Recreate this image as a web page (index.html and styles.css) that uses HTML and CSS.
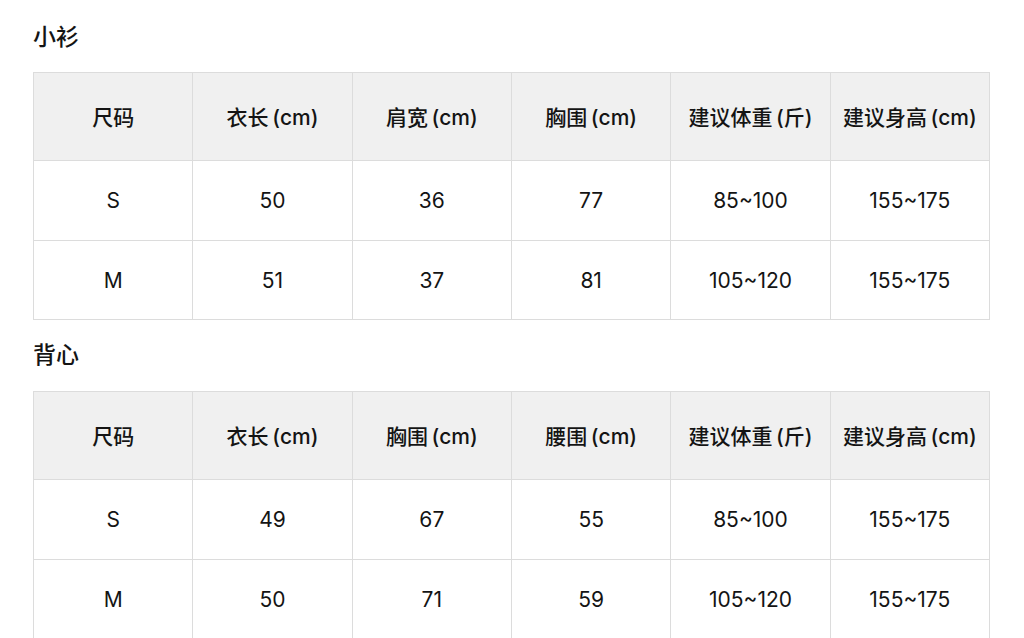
FILE: index.html
```html
<!DOCTYPE html>
<html lang="zh">
<head>
<meta charset="utf-8">
<link rel="stylesheet" href="styles.css">
</head>
<body>
<div class="page">
  <section class="block">
    <h3 class="title">小衫</h3>
    <table class="size-table">
      <thead>
        <tr><th>尺码</th><th>衣长 (cm)</th><th>肩宽 (cm)</th><th>胸围 (cm)</th><th>建议体重 (斤)</th><th>建议身高 (cm)</th></tr>
      </thead>
      <tbody>
        <tr><td>S</td><td>50</td><td>36</td><td>77</td><td>85~100</td><td>155~175</td></tr>
        <tr><td>M</td><td>51</td><td>37</td><td>81</td><td>105~120</td><td>155~175</td></tr>
      </tbody>
    </table>
  </section>
  <section class="block">
    <h3 class="title">背心</h3>
    <table class="size-table">
      <thead>
        <tr><th>尺码</th><th>衣长 (cm)</th><th>胸围 (cm)</th><th>腰围 (cm)</th><th>建议体重 (斤)</th><th>建议身高 (cm)</th></tr>
      </thead>
      <tbody>
        <tr><td>S</td><td>49</td><td>67</td><td>55</td><td>85~100</td><td>155~175</td></tr>
        <tr><td>M</td><td>50</td><td>71</td><td>59</td><td>105~120</td><td>155~175</td></tr>
      </tbody>
    </table>
  </section>
</div>
</body>
</html>
```

FILE: styles.css
```css
html, body {
  margin: 0;
  padding: 0;
  background: #ffffff;
}
body {
  font-family: "Inter", "Noto Sans CJK SC", sans-serif;
  color: #141414;
}
.page {
  padding: 0 34px 0 33px;
}
.title {
  margin: 0;
  height: 72px;
  line-height: 72px;
  font-size: 23px;
  font-weight: 500;
  padding-top: 1px;
  box-sizing: border-box;
}
.block + .block .title {
  height: 71px;
  line-height: 70px;
  padding-top: 0;
}
.size-table {
  width: 957px;
  border-collapse: collapse;
  table-layout: fixed;
}
.size-table th,
.size-table td {
  border: 1px solid #dcdcdc;
  text-align: center;
  vertical-align: middle;
  font-size: 21px;
  padding: 0;
  white-space: nowrap;
  word-spacing: -2px;
}
.size-table th {
  background: #f0f0f0;
  height: 85px;
  font-weight: 500;
  padding-bottom: 2px;
}
.size-table td {
  height: 79px;
  font-weight: 400;
}
.size-table tbody tr:last-child td {
  height: 78px;
}
```
